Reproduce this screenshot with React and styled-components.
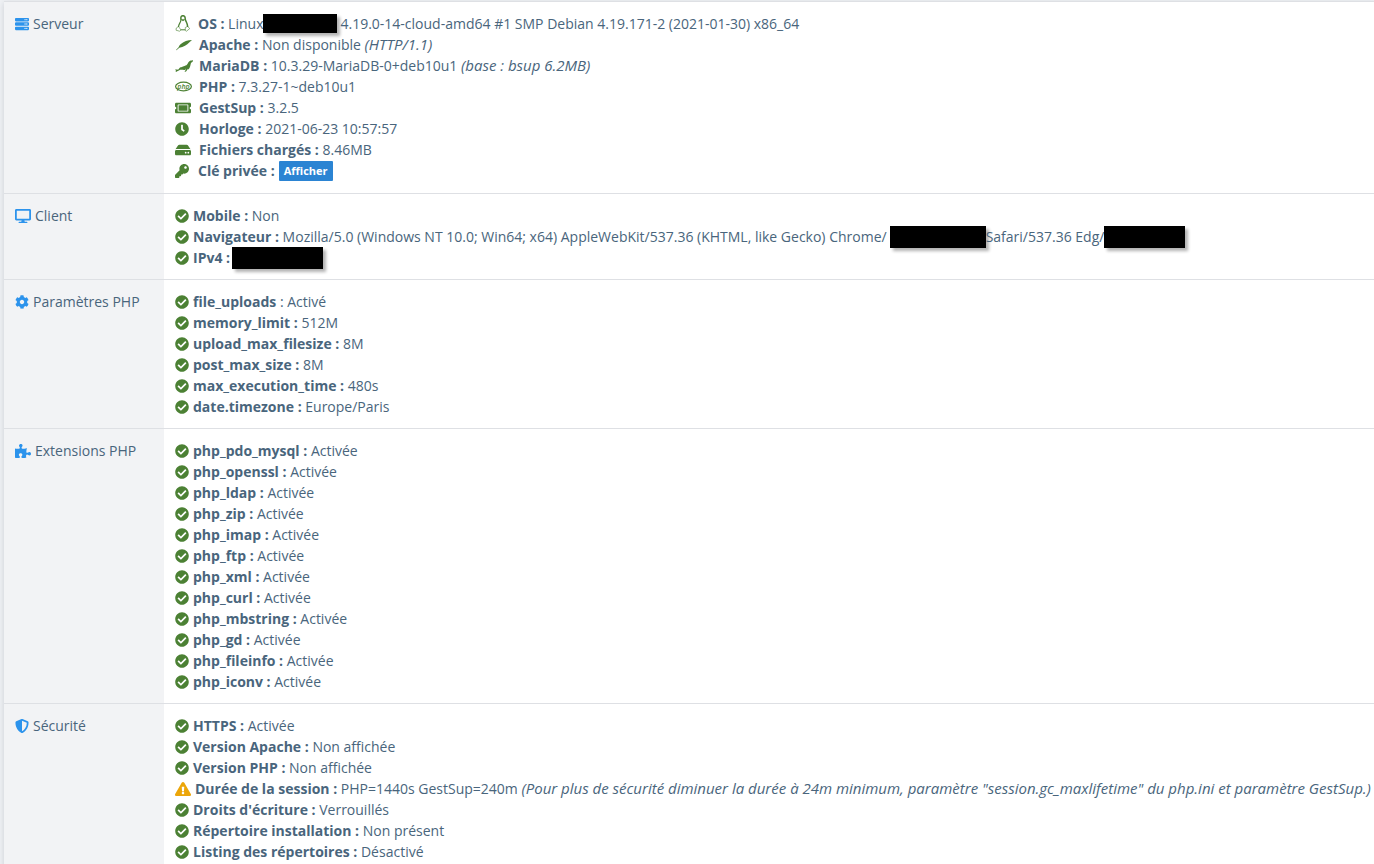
import React from "react";
import styled, { createGlobalStyle, css } from "styled-components";
import {
  FaServer, FaDesktop, FaCog, FaPuzzlePiece, FaShieldAlt, FaCheckCircle,
  FaExclamationTriangle, FaKey, FaHdd, FaClock, FaTicketAlt,
} from "react-icons/fa";
import { SiMariadb } from "react-icons/si";

const GlobalStyle = createGlobalStyle`
  * { box-sizing: border-box; }
  body {
    margin: 0;
    background: #eff1f4;
    color: #49657c;
    font: 14px/21px "Open Sans", "Noto Sans", sans-serif;
  }
`;

const Page = styled.main`
  padding: 1px 0 0 4px;
  overflow: hidden;
  height: 100vh;
`;

const Table = styled.table`
  width: 100%;
  table-layout: fixed;
  border-collapse: separate;
  border-spacing: 0;
  background: #fff;
  box-shadow: 0 2px 6px rgba(60, 70, 90, 0.2);
`;

const cell = css`
  padding: 11px;
  border-top: 1px solid #dee0e4;
  text-align: left;
  vertical-align: top;
  font-weight: 400;

  tr:first-child > & { padding-bottom: 12px; }
`;

const Heading = styled.th`
  ${cell}
  width: 160px;
  background: #f2f3f5;
  white-space: nowrap;
`;

const Content = styled.td`
  ${cell}
`;

const Title = styled.span`
  display: flex;
  align-items: center;
  gap: 4px;
  svg { color: #2c93ec; }
`;

const List = styled.ul`
  list-style: none;
  margin: 0;
  padding: 0;
`;

const Line = styled.li`
  display: flex;
  align-items: center;
  height: 21px;
  white-space: pre;
  svg { flex: none; }
`;

const Note = styled.em`
  font-size: 15px;
`;

const Mark = styled.span`
  display: flex;
  align-items: center;
  flex: none;
  width: ${(p) => p.$width}px;
  color: ${(p) => (p.$warning ? "#eca60a" : "#4c8134")};
`;

const Redacted = styled.span`
  flex: none;
  width: ${(p) => p.$width}px;
  height: ${(p) => p.$height}px;
  margin-left: ${(p) => p.$before || 0}px;
  margin-right: ${(p) => p.$after || 0}px;
  background: #000;
  box-shadow: 3px 3px 3px rgba(0, 0, 0, 0.3);
`;

const ShowButton = styled.button`
  height: 20px;
  margin-left: 4px;
  padding: 0 5px;
  border: 0;
  border-radius: 1px;
  background: #2b84d3;
  color: #fff;
  font: 700 11px/20px "Open Sans", sans-serif;
`;

const Tux = () => (
  <svg width="16" height="17" viewBox="0 0 16 17" fill="none" stroke="currentColor" aria-hidden="true">
    <path d="M6 5C5.600 2 6 .7 8 .7S10.300 2 10.300 4.500C11 7 13 9 12.600 12" strokeWidth="1.500" />
    <path d="M6 5C5.500 8 3.500 9 3.500 12" strokeWidth="1.300" />
    <path d="M6.500 4.300 8 5.500 9.500 4.300" strokeWidth="1.200" />
    <path d="M5.800 14.800h4.500" strokeWidth="1" />
    <path d="M3.500 11.500 6 15 4.500 16.200 1 15.200 1.300 13ZM12.500 11.500 14.800 13.500 11.500 16.200 10.300 15.500V12.500Z" strokeWidth=".6" />
  </svg>
);

const Feather = () => (
  <svg width="18" height="12" viewBox="0 0 18 12" fill="currentColor" aria-hidden="true">
    <path d="M17 1C13 1 8.500 2.500 5.500 5.300 4.500 6.300 3.800 7.300 3.600 8.300L1 11l.5.3L4.300 8.700C8.500 8.300 12 6 14.200 3.600 15.200 2.500 16 1.900 17 1Z" />
  </svg>
);

const Php = () => (
  <svg width="18" height="11" viewBox="0 0 18 11" aria-hidden="true">
    <ellipse cx="8.500" cy="5.500" rx="7.900" ry="4.300" fill="none" stroke="currentColor" strokeWidth="1.200" />
    <text x="8.500" y="7.500" textAnchor="middle" fill="currentColor" fontFamily="Open Sans, sans-serif" fontSize="7" fontStyle="italic" fontWeight="600">php</text>
  </svg>
);

const Item = ({ icon, label, width = 18, warning, children }) => (
  <Line>
    <Mark $width={width} $warning={warning}>{icon || <FaCheckCircle size={14} />}</Mark>
    <strong>{label}</strong>
    {children}
  </Line>
);

const Section = ({ icon, title, children }) => (
  <tr>
    <Heading scope="row"><Title>{icon}{title}</Title></Heading>
    <Content><List>{children}</List></Content>
  </tr>
);

const extensions = [
  "php_pdo_mysql", "php_openssl", "php_ldap", "php_zip", "php_imap", "php_ftp",
  "php_xml", "php_curl", "php_mbstring", "php_gd", "php_fileinfo", "php_iconv",
];

const limits = [
  ["memory_limit", "512M"],
  ["upload_max_filesize", "8M"],
  ["post_max_size", "8M"],
  ["max_execution_time", "480s"],
  ["date.timezone", "Europe/Paris"],
];

export default function App() {
  return (
    <Page>
      <GlobalStyle />
      <Table>
        <tbody>
          <Section icon={<FaServer size={14} />} title="Serveur">
            <Item width={23} icon={<Tux />} label="OS :">
              {" Linux"}<Redacted $width={74} $height={19} $after={3} />
              {"4.19.0-14-cloud-amd64 #1 SMP Debian 4.19.171-2 (2021-01-30) x86_64"}
            </Item>
            <Item width={24} icon={<Feather />} label="Apache :">{" Non disponible "}<Note>(HTTP/1.1)</Note></Item>
            <Item width={24} icon={<SiMariadb size={18} />} label="MariaDB :">{" 10.3.29-MariaDB-0+deb10u1 "}<Note>(base : bsup 6.2MB)</Note></Item>
            <Item width={24} icon={<Php />} label="PHP :">{" 7.3.27-1~deb10u1"}</Item>
            <Item width={24} icon={<FaTicketAlt size={16} />} label="GestSup :">{" 3.2.5"}</Item>
            <Item width={24} icon={<FaClock size={14} />} label="Horloge :">{" 2021-06-23 10:57:57"}</Item>
            <Item width={24} icon={<FaHdd size={16} />} label="Fichiers chargés :">{" 8.46MB"}</Item>
            <Item width={23} icon={<FaKey size={14} />} label="Clé privée :"><ShowButton type="button">Afficher</ShowButton></Item>
          </Section>

          <Section icon={<FaDesktop size={16} />} title="Client">
            <Item label="Mobile :">{" Non"}</Item>
            <Item label="Navigateur :">
              {" Mozilla/5.0 (Windows NT 10.0; Win64; x64) AppleWebKit/537.36 (KHTML, like Gecko) Chrome/"}
              <Redacted $width={96} $height={22} $before={3} />Safari/537.36 Edg/<Redacted $width={81} $height={22} />
            </Item>
            <Item label="IPv4 :"><Redacted $width={91} $height={22} $before={2} /></Item>
          </Section>

          <Section icon={<FaCog size={14} />} title="Paramètres PHP">
            <Item label="file_uploads">{" : Activé"}</Item>
            {limits.map(([name, value]) => (
              <Item key={name} label={`${name} :`}>{` ${value}`}</Item>
            ))}
          </Section>

          <Section icon={<FaPuzzlePiece size={16} />} title="Extensions PHP">
            {extensions.map((name) => (
              <Item key={name} label={`${name} :`}>{" Activée"}</Item>
            ))}
          </Section>

          <Section icon={<FaShieldAlt size={14} />} title="Sécurité">
            <Item label="HTTPS :">{" Activée"}</Item>
            <Item label="Version Apache :">{" Non affichée"}</Item>
            <Item label="Version PHP :">{" Non affichée"}</Item>
            <Item width={20} warning icon={<FaExclamationTriangle size={16} />} label="Durée de la session :">
              {" PHP=1440s GestSup=240m "}
              <Note>(Pour plus de sécurité diminuer la durée à 24m minimum, paramètre "session.gc_maxlifetime" du php.ini et paramètre GestSup.)</Note>
            </Item>
            <Item label="Droits d'écriture :">{" Verrouillés"}</Item>
            <Item label="Répertoire installation :">{" Non présent"}</Item>
            <Item label="Listing des répertoires :">{" Désactivé"}</Item>
          </Section>
        </tbody>
      </Table>
    </Page>
  );
}
